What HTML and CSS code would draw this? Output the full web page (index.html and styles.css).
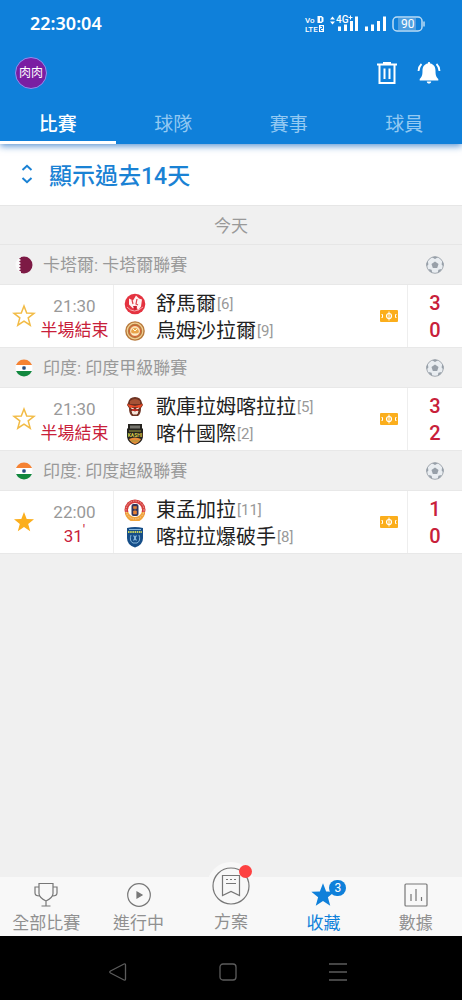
FILE: index.html
```html
<!DOCTYPE html>
<html lang="zh-Hant">
<head>
    <meta charset="UTF-8">
    <meta name="viewport" content="width=device-width, initial-scale=1.0">
    <title>收藏</title>
    <link rel="stylesheet" href="styles.css">
</head>
<body>

<!-- Shared icons -->
<svg class="defs" width="0" height="0" aria-hidden="true">
    <symbol id="star" viewBox="0 0 24 24">
        <path d="M12 2l2.700 7 7.300.3-5.800 4.600 2 7.300L12 17.100l-6.200 4.100 2-7.300L2 9.300l7.300-.3z"/>
    </symbol>
    <symbol id="ball" viewBox="0 0 20 20">
        <circle cx="10" cy="10" r="8.300" fill="#e9edf1" stroke="#a5abb2" stroke-width="1"/>
        <path d="M10 6.500l3.500 2.600-1.300 4H7.800l-1.300-4z" fill="#98a0a9"/>
        <path d="M7 2.300L10 4l3-1.700-3-.8zM17.200 6l-.6 3.400 1.900 2.200.2-3zM2.800 6l.6 3.400-1.900 2.200-.2-3zM12.700 18l.7-3.300 3.200-.8-1.400 2.700zM7.300 18l-.7-3.300-3.200-.8 1.400 2.700z" fill="#98a0a9"/>
    </symbol>
    <symbol id="pitch" viewBox="0 0 18 12">
        <rect width="18" height="12" rx="1" fill="#fbae1c"/>
        <path d="M9 1.500v9M1.500 4.500h1v3h-1M16.500 4.500h-1v3h1" fill="none" stroke="#fff"/>
        <circle cx="9" cy="6" r="2.500" fill="none" stroke="#fff" stroke-width="1.200"/>
    </symbol>
    <symbol id="india" viewBox="0 0 18 18">
        <clipPath id="round"><circle cx="9" cy="9" r="8.500"/></clipPath>
        <g clip-path="url(#round)">
            <path d="M0 0h18v6H0z" fill="#f58233"/>
            <path d="M0 6h18v6H0z" fill="#fff"/>
            <path d="M0 12h18v6H0z" fill="#12883f"/>
        </g>
        <circle cx="9" cy="9" r="2" fill="#4c6d9c"/>
        <circle cx="9" cy="9" r="1" fill="#1e4270"/>
    </symbol>
</svg>

<header class="header">
    <div class="status">
        <time class="clock">22:30:04</time>
        <svg width="124" height="20" viewBox="0 0 124 20" aria-hidden="true">
            <g fill="#fff">
                <text x="3" y="10" class="tiny">Vo</text>
                <text x="3" y="19" class="tiny">LTE</text>
                <path d="M15.500 3h4l2 1.500v4l-2 1.500h-4zm2.500 1.500v4h1.500v-4zM17 12h5v7h-5z"/>
                <path d="M28 6.500l2.500-3 2.500 3zM28 8.500l2.500 3 2.500-3z"/>
                <text x="34" y="10" class="net">4G</text>
                <path d="M46.500 4.500h4M48.500 2.500v4" stroke="#fff"/>
                <path d="M36 13.500h3V18h-3zM42 11.500h3V18h-3zM48 8h3v10h-3zM53 3.500h3V18h-3z"/>
                <path d="M63 13.500h3V18h-3zM69 11.500h3V18h-3zM75 8h3v10h-3zM81 3.500h3V18h-3z"/>
            </g>
            <path d="M96 5h18v12H96z" fill="#4f9fe0"/>
            <rect x="91" y="4" width="29" height="14" rx="4" fill="none" stroke="#bcdcf5" stroke-width="1.500"/>
            <path d="M122 8.500v5" stroke="#bcdcf5" stroke-width="1.500"/>
            <text x="99" y="15" class="battery">90</text>
            <path d="M18.500 13.500h2v2h-2v2h2" fill="none" stroke="#0f80da"/>
        </svg>
    </div>
    <div class="toolbar">
        <button class="avatar" type="button">肉肉</button>
        <div class="tools">
            <button class="icon-button" type="button" aria-label="刪除">
                <svg width="24" height="26" viewBox="0 0 24 26" fill="none" stroke="#fff" stroke-width="2">
                    <path d="M2 4.500h20M8 3h8M4.500 5v18h15V5M9.500 8.500v10.500M14.500 8.500v10.500"/>
                </svg>
            </button>
            <button class="icon-button" type="button" aria-label="通知">
                <svg width="26" height="26" viewBox="0 0 26 26">
                    <path d="M11.800 3.500c0-1.900 2.400-1.900 2.400 0 3.800.7 5.300 3.600 5.300 7.300 0 4.700.8 6.200 2.800 8.200v1.500H3.700V19c2-2 2.800-3.500 2.800-8.200 0-3.700 1.500-6.600 5.300-7.300zM10.800 21.500h4.400c0 2.800-4.400 2.800-4.400 0z" fill="#fff"/>
                    <path d="M5.500 4Q2.800 6.500 2.500 11M20.500 4Q23.200 6.500 23.500 11" fill="none" stroke="#fff" stroke-width="1.800"/>
                </svg>
            </button>
        </div>
    </div>
    <nav class="tabs">
        <a href="#" class="tab active">比賽</a>
        <a href="#" class="tab">球隊</a>
        <a href="#" class="tab">賽事</a>
        <a href="#" class="tab">球員</a>
    </nav>
</header>

<main class="content">
    <button class="show-past" type="button">
        <svg width="12" height="20" viewBox="0 0 12 20" fill="none" stroke="#1a82d4" stroke-width="2">
            <path d="M1.500 6L6 1.800 10.500 6M1.500 14L6 18.200l4.500-4.200"/>
        </svg>
        <span>顯示過去14天</span>
    </button>
    <h2 class="date">今天</h2>

    <section>
        <h3 class="league">
            <svg width="18" height="18" viewBox="0 0 18 18">
                <circle cx="9" cy="9" r="8.500" fill="#f9f9f9"/>
                <path d="M6 1l3-.5a8.500 8.500 0 0 1 0 17l-3-.5v-1.500l-2-1 2-1.500-2-1.500 2-1.500-2-1.500 2-1.500-2-1.500 2-1.500-2-1.500 2-1z" fill="#7d1a45"/>
            </svg>
            <span>卡塔爾: 卡塔爾聯賽</span>
            <svg class="sport" width="20" height="20"><use href="#ball"/></svg>
        </h3>
        <div class="match">
            <button class="fav" type="button" aria-label="收藏"><svg width="24" height="24"><use href="#star"/></svg></button>
            <div class="time"><span>21:30</span><span class="live">半場結束</span></div>
            <div class="teams">
                <div class="team">
                    <svg width="22" height="22" viewBox="0 0 22 22">
                        <circle cx="11" cy="11" r="10.300" fill="#e43340"/>
                        <path d="M5 5.500l4 2 3-5 3 3 3 1-1 7-3 4-2-5-3 3-4-4z" fill="#fff3f2"/>
                        <path d="M8 7l1 4M13 6l-1 5 2 1" fill="none" stroke="#e0404b" stroke-width="1.200"/>
                        <path d="M9 13l2 5 2-5z" fill="#c91f30"/>
                        <path d="M3 14q7 8 16 0" fill="none" stroke="#f7a8ac" stroke-width="1"/>
                    </svg>
                    <span class="name">舒馬爾</span><span class="rank">[6]</span>
                </div>
                <div class="team">
                    <svg width="22" height="22" viewBox="0 0 22 22">
                        <circle cx="11" cy="11" r="9.800" fill="#b8793b"/>
                        <circle cx="11" cy="11" r="7.800" fill="none" stroke="#f0cf94" stroke-width="1.200"/>
                        <circle cx="11" cy="11" r="5.500" fill="#f8dfb0" stroke="#d35c32"/>
                        <path d="M7 12q1-4 4-4t4 4l-2 2H9z" fill="#e8a34a"/>
                        <path d="M8 14h6M9 9l2 2 2-2" fill="none" stroke="#fff7df"/>
                    </svg>
                    <span class="name">烏姆沙拉爾</span><span class="rank">[9]</span>
                </div>
            </div>
            <svg class="pitch" width="18" height="12"><use href="#pitch"/></svg>
            <div class="score"><span>3</span><span>0</span></div>
        </div>
    </section>

    <section>
        <h3 class="league">
            <svg width="18" height="18"><use href="#india"/></svg>
            <span>印度: 印度甲級聯賽</span>
            <svg class="sport" width="20" height="20"><use href="#ball"/></svg>
        </h3>
        <div class="match">
            <button class="fav" type="button" aria-label="收藏"><svg width="24" height="24"><use href="#star"/></svg></button>
            <div class="time"><span>21:30</span><span class="live">半場結束</span></div>
            <div class="teams">
                <div class="team">
                    <svg width="22" height="22" viewBox="0 0 22 22">
                        <path d="M4 7q1-6 7-6t7 6l1 2-2 3q0 6-3 8H8q-3-2-3-8L3 9z" fill="#6d3323"/>
                        <path d="M6 5q5-4 10 0v3H6z" fill="#a65235"/>
                        <path d="M3 8l8 2 8-2-3 4-5-1-5 1z" fill="#ee4a26"/>
                        <path d="M7 12l3 1M15 12l-3 1M8 15q3 2 6 0l-1 3H9z" stroke="#f9e8dc" fill="#f4e2d7"/>
                        <path d="M8 14h6" stroke="#d72822" stroke-width="1.500"/>
                    </svg>
                    <span class="name">歌庫拉姆喀拉拉</span><span class="rank">[5]</span>
                </div>
                <div class="team">
                    <svg width="22" height="22" viewBox="0 0 22 22">
                        <path d="M4 1h14v4l1 1v8q-1 6-8 8-7-2-8-8V6l1-1z" fill="#25231f"/>
                        <path d="M6 2.500h10v3H6z" fill="#75746d"/>
                        <path d="M5 16q6-3 12 0-2 4-6 5-4-1-6-5z" fill="#e98b39"/>
                        <text x="11" y="14" class="crest-text">KASHI</text>
                        <path d="M5 8h12M7 18h8" stroke="#9d9b3d"/>
                    </svg>
                    <span class="name">喀什國際</span><span class="rank">[2]</span>
                </div>
            </div>
            <svg class="pitch" width="18" height="12"><use href="#pitch"/></svg>
            <div class="score"><span>3</span><span>2</span></div>
        </div>
    </section>

    <section>
        <h3 class="league">
            <svg width="18" height="18"><use href="#india"/></svg>
            <span>印度: 印度超級聯賽</span>
            <svg class="sport" width="20" height="20"><use href="#ball"/></svg>
        </h3>
        <div class="match">
            <button class="fav on" type="button" aria-label="取消收藏"><svg width="24" height="24"><use href="#star"/></svg></button>
            <div class="time"><span>22:00</span><span class="live">31<sup>'</sup></span></div>
            <div class="teams">
                <div class="team">
                    <svg width="22" height="22" viewBox="0 0 22 22">
                        <circle cx="11" cy="11" r="10.500" fill="#d43b3c"/>
                        <path d="M1 13h20a10 10 0 0 1-20 0z" fill="#f0a43a"/>
                        <circle cx="11" cy="11" r="9" fill="none" stroke="#f5d6c4" stroke-width=".7" stroke-dasharray="1.500 1"/>
                        <circle cx="11" cy="11" r="7" fill="#fff"/>
                        <rect x="7.500" y="5" width="7" height="12" rx="2" fill="#30365c"/>
                        <path d="M9.500 7.500h3v2h-3zM9.500 12h3v3h-3zM11 9v4" fill="#e68236" stroke="#e68236" stroke-width=".6"/>
                    </svg>
                    <span class="name">東孟加拉</span><span class="rank">[11]</span>
                </div>
                <div class="team">
                    <svg width="22" height="22" viewBox="0 0 22 22">
                        <path d="M3 2q8-2 16 0v10q0 7-8 9.500Q3 19 3 12z" fill="#164e88"/>
                        <path d="M4 6h14" stroke="#c8d25c" stroke-width="2" stroke-dasharray="1.500 .7"/>
                        <path d="M5 3.500h12M7 9q-2 6 2 8M15 9q2 6-2 8M9 10h1.500v4H9M13 10h-1.500v4H13M9 17h4" fill="none" stroke="#85b5da" stroke-width="1"/>
                    </svg>
                    <span class="name">喀拉拉爆破手</span><span class="rank">[8]</span>
                </div>
            </div>
            <svg class="pitch" width="18" height="12"><use href="#pitch"/></svg>
            <div class="score"><span>1</span><span>0</span></div>
        </div>
    </section>
</main>

<footer>
    <nav class="bottom-nav">
        <a href="#" class="item">
            <svg width="28" height="28" viewBox="0 0 28 28">
                <path d="M7 2.500h14v10q0 4-7 7.500-7-3.500-7-7.500zM7 6H3v6q0 3 4.500 3M21 6h4v6q0 3-4.500 3M14 20v5M9.500 25h9"/>
            </svg>
            <span>全部比賽</span>
        </a>
        <a href="#" class="item">
            <svg width="28" height="28" viewBox="0 0 28 28">
                <circle cx="14" cy="14" r="11.300"/>
                <path d="M12 11l5 3-5 3z" fill="#777"/>
            </svg>
            <span>進行中</span>
        </a>
        <a href="#" class="item plan">
            <span class="bump">
                <svg width="38" height="38" viewBox="0 0 38 38">
                    <circle cx="19" cy="19" r="18"/>
                    <path d="M10.500 8.500h17v20l-8.500-4-8.500 4zM14 12.500h2M18 12.500h2M22 12.500h2M14 16.500h10"/>
                </svg>
                <span class="dot"></span>
            </span>
            <span>方案</span>
        </a>
        <a href="#" class="item active">
            <span class="icon-wrap">
                <svg width="28" height="28" viewBox="0 0 24 24"><use href="#star"/></svg>
                <span class="badge">3</span>
            </span>
            <span>收藏</span>
        </a>
        <a href="#" class="item">
            <svg width="28" height="28" viewBox="0 0 28 28">
                <rect x="3" y="3" width="22" height="22" rx="1"/>
                <path d="M9 13v7M14 8v12M19.500 16v4"/>
            </svg>
            <span>數據</span>
        </a>
    </nav>
    <div class="system-nav">
        <button type="button" aria-label="返回">
            <svg width="20" height="20" viewBox="0 0 20 20"><path d="M2.500 9L16 2q1.500-.5 1.500 1v14q0 1.500-1.500 1L2.500 11q-1.500-1 0-2z"/></svg>
        </button>
        <button type="button" aria-label="主畫面">
            <svg width="20" height="20" viewBox="0 0 20 20"><rect x="2" y="2" width="16" height="16" rx="3"/></svg>
        </button>
        <button type="button" aria-label="最近">
            <svg width="20" height="20" viewBox="0 0 20 20"><path d="M1 2h18M1 10h18M1 18h18"/></svg>
        </button>
    </div>
</footer>

</body>
</html>
```
FILE: styles.css
```css
* {
    box-sizing: border-box;
}

body {
    margin: 0;
    min-height: 100vh;
    display: flex;
    flex-direction: column;
    background-color: #f0f0f0;
    font-family: Roboto, "Noto Sans CJK TC", sans-serif;
    font-size: 17px;
    line-height: 24px;
    color: #999;
}

button {
    margin: 0;
    padding: 0;
    border: none;
    background: none;
    font-family: inherit;
    cursor: pointer;
}

a {
    text-decoration: none;
}

svg {
    display: block;
    flex-shrink: 0;
}

.defs {
    position: absolute;
}

/* Header */
.header {
    position: relative;
    background-color: #0f80da;
    color: #fff;
    box-shadow: 0 2px 7px rgba(15, 100, 190, 0.7);
}

.status {
    display: flex;
    justify-content: space-between;
    align-items: center;
    height: 46px;
    padding: 0 36px 0 30px;
}

.clock {
    font-family: "Noto Sans", sans-serif;
    font-size: 18px;
    font-weight: 600;
}

.tiny {
    font-size: 8px;
    font-weight: 500;
}

.net {
    font-size: 10px;
    font-weight: 500;
}

.battery {
    font-size: 12px;
    fill: #fff;
}

.crest-text {
    font-size: 5px;
    font-weight: 700;
    text-anchor: middle;
    fill: #d9cf4a;
}

.toolbar {
    display: flex;
    justify-content: space-between;
    align-items: center;
    height: 54px;
    padding: 0 20px 0 15px;
}

.avatar {
    width: 32px;
    height: 32px;
    border: 1px solid #8f8ff0;
    border-radius: 50%;
    background-color: #7a1ea2;
    color: #fff;
    font-size: 12px;
    line-height: 16px;
}

.tools {
    display: flex;
    gap: 17px;
}

.tabs {
    display: flex;
}

.tab {
    flex: 1;
    height: 44px;
    padding-top: 12px;
    border-bottom: 3px solid transparent;
    text-align: center;
    font-size: 19px;
    line-height: 26px;
    color: #93c9f2;
}

.tab.active {
    border-color: #fff;
    color: #fff;
    font-weight: 500;
}

/* Match list */
.content {
    flex: 1;
}

.show-past {
    display: flex;
    align-items: center;
    gap: 16px;
    width: 100%;
    height: 61px;
    padding: 0 21px 2px;
    background-color: #fff;
    color: #1a82d4;
    font-size: 23px;
    font-weight: 500;
}

.date {
    margin: 0;
    height: 40px;
    border-top: 1px solid #e6e6e6;
    border-bottom: 1px solid #e6e6e6;
    text-align: center;
    font-size: 17px;
    font-weight: 400;
    line-height: 40px;
}

.league {
    display: flex;
    align-items: center;
    gap: 10px;
    margin: 0;
    height: 39px;
    padding: 0 17px 0 15px;
    font-size: 17px;
    font-weight: 400;
}

.sport {
    margin-left: auto;
}

.match {
    display: flex;
    align-items: center;
    height: 64px;
    border-top: 1px solid #e8e8e8;
    border-bottom: 1px solid #e8e8e8;
    background-color: #fff;
}

.fav {
    width: 36px;
    padding-left: 12px;
}

.fav svg {
    fill: none;
    stroke: #f2bb45;
    stroke-width: 1.5;
}

.fav.on svg {
    fill: #fbae1c;
    stroke: none;
}

.time {
    display: flex;
    flex-direction: column;
    width: 77px;
    padding-top: 3px;
    text-align: center;
}

.live {
    color: #c8203a;
}

.live sup {
    font-size: 14px;
    line-height: 0;
}

.teams {
    flex: 1;
    height: 100%;
    padding: 5px 0 0 10px;
    border-left: 1px solid #eee;
}

.team {
    display: flex;
    align-items: center;
    height: 27px;
}

.name {
    margin-left: 10px;
    font-size: 20px;
    color: #222;
}

.rank {
    margin-left: 1px;
    font-size: 15px;
}

.pitch {
    margin-right: 9px;
}

.score {
    display: flex;
    flex-direction: column;
    width: 55px;
    height: 100%;
    padding-top: 5px;
    border-left: 1px solid #eee;
    text-align: center;
    font-size: 20px;
    font-weight: 500;
    line-height: 27px;
    color: #c8203a;
}

/* Bottom bar */
.bottom-nav {
    display: flex;
    height: 59px;
    background-color: #f8f8f8;
}

.item {
    flex: 1;
    display: flex;
    flex-direction: column;
    align-items: center;
    gap: 2px;
    padding-top: 4px;
    color: #909090;
}

.item svg {
    fill: none;
    stroke: #777;
    stroke-width: 1.2;
}

.item.active {
    color: #0f80da;
}

.item.active svg {
    fill: #0f80da;
    stroke: none;
}

.icon-wrap {
    position: relative;
}

.badge {
    position: absolute;
    top: -1px;
    left: 20px;
    width: 17px;
    height: 16px;
    border-radius: 8px;
    background-color: #0f80da;
    color: #fff;
    font-size: 12px;
    line-height: 16px;
    text-align: center;
}

.plan {
    justify-content: flex-end;
    gap: 0;
    padding: 0 0 2px;
}

.bump {
    position: relative;
    padding: 5px;
    border-radius: 50%;
    background-color: #f8f8f8;
}

.dot {
    position: absolute;
    top: 3px;
    right: 3px;
    width: 13px;
    height: 13px;
    border-radius: 50%;
    background-color: #fd4141;
}

.system-nav {
    display: flex;
    justify-content: center;
    align-items: center;
    gap: 90px;
    height: 64px;
    padding: 8px 6px 0 0;
    background-color: #000;
}

.system-nav svg {
    fill: none;
    stroke: #5c5c5c;
    stroke-width: 1.3;
}
```
